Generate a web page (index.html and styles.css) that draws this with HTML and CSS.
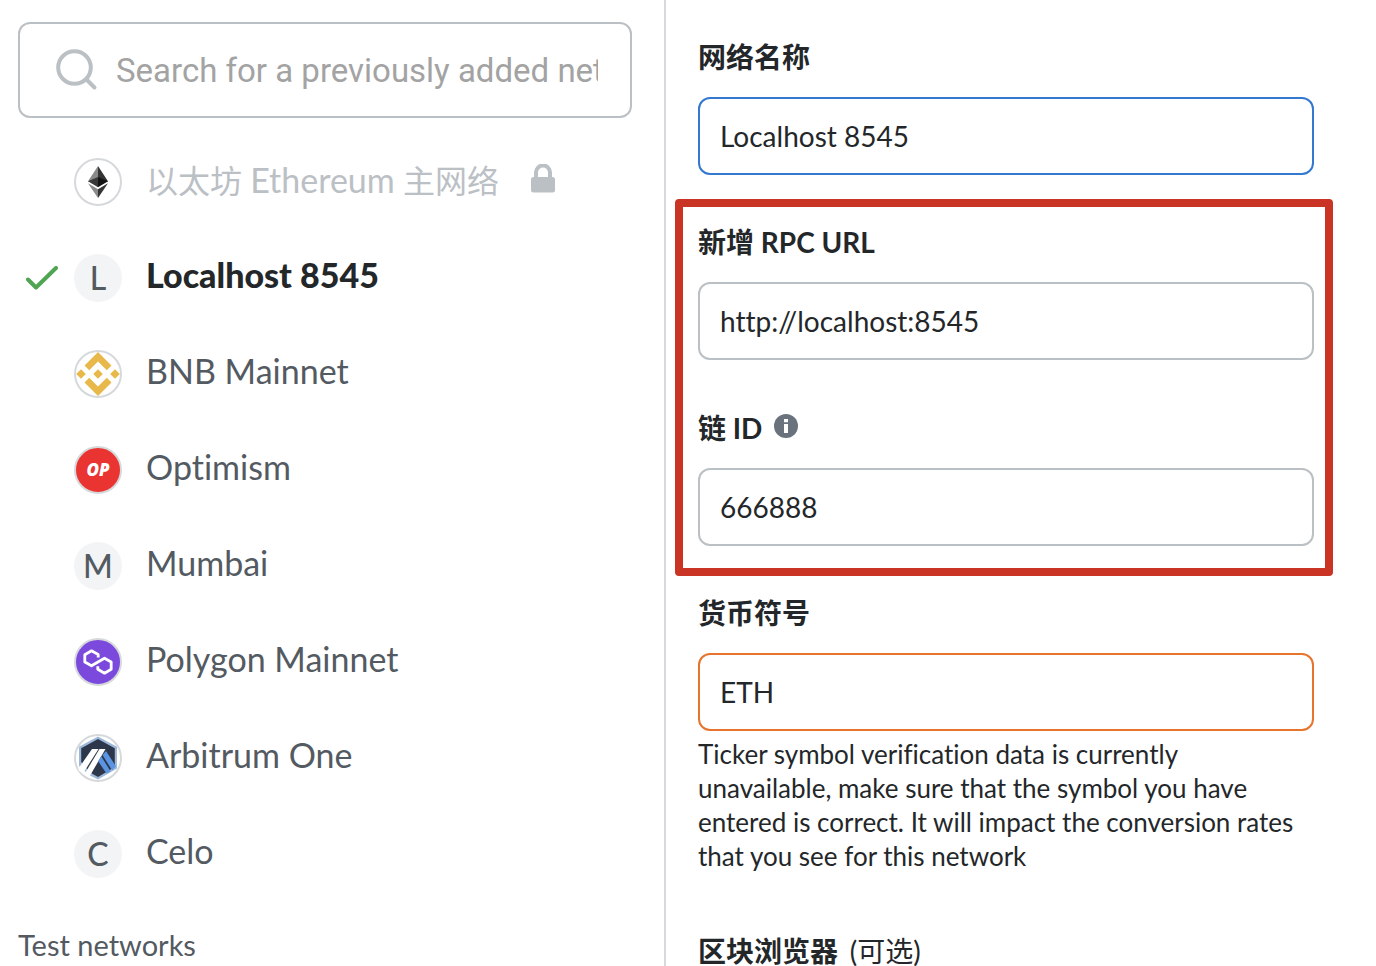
FILE: index.html
```html
<!DOCTYPE html>
<html lang="zh-CN">
<head>
<meta charset="utf-8">
<meta name="viewport" content="width=device-width, initial-scale=1">
<title>网络</title>
<link rel="stylesheet" href="styles.css">
</head>
<body>
<div class="app">
  <aside class="sidebar">
    <div class="search">
      <svg class="search-icon" viewBox="0 0 42 42" aria-hidden="true"><circle cx="18.500" cy="18.500" r="16.300"/><path d="M30.500 30.500 38.500 38.500"/></svg>
      <input class="search-input" type="text" aria-label="Search" placeholder="Search for a previously added network">
    </div>
    <ul class="networks">
      <li><button class="network locked" type="button">
        <span class="check"></span>
        <span class="avatar ringed"><svg viewBox="0 0 48 48" aria-hidden="true">
          <path fill="#8a8a8a" d="M24 8v19.600l-10-4.400z"/><path fill="#343434" d="M24 8l10 15.200-10 4.400z"/>
          <path fill="#393939" d="M24 19v10.200l-10-6z"/><path fill="#141414" d="M24 19l10 4.200-10 6z"/>
          <path fill="#8a8a8a" d="M14 25.200l10 6V40z"/><path fill="#343434" d="M34 25.200l-10 6V40z"/></svg></span>
        <span class="name">以太坊 <span class="latin">Ethereum</span> 主网络</span>
        <svg class="lock" viewBox="0 0 24 30" aria-hidden="true"><path d="M5 14V8.500a7 7 0 0 1 14 0V14" fill="none" stroke="currentColor" stroke-width="4"/><rect y="13" width="24" height="15.500" rx="2.500" fill="currentColor"/></svg>
      </button></li>
      <li><button class="network selected" type="button">
        <span class="check"><svg viewBox="0 0 32 24" aria-hidden="true"><path d="M2 13.500 10 21.500 30 2"/></svg></span>
        <span class="avatar">L</span>
        <span class="name">Localhost 8545</span>
      </button></li>
      <li><button class="network" type="button">
        <span class="check"></span>
        <span class="avatar ringed"><svg viewBox="0 0 48 48" aria-hidden="true"><g fill="#e8b94a">
          <path d="M24 2 37.500 15.500 32.800 20.200 24 11.400 15.200 20.200 10.500 15.500z"/>
          <path d="M24 46 37.500 32.500 32.800 27.800 24 36.600 15.200 27.800 10.500 32.500z"/>
          <path d="M24 19.200 28.800 24 24 28.800 19.200 24z"/><path d="M7 19.200 11.800 24 7 28.800 2.200 24z"/><path d="M41 19.200 45.800 24 41 28.800 36.200 24z"/></g></svg></span>
        <span class="name">BNB Mainnet</span>
      </button></li>
      <li><button class="network" type="button">
        <span class="check"></span>
        <span class="avatar ringed optimism">OP</span>
        <span class="name">Optimism</span>
      </button></li>
      <li><button class="network" type="button">
        <span class="check"></span>
        <span class="avatar">M</span>
        <span class="name">Mumbai</span>
      </button></li>
      <li><button class="network" type="button">
        <span class="check"></span>
        <span class="avatar ringed polygon"><svg viewBox="0 0 48 48" aria-hidden="true"><path fill="none" stroke="#fff" stroke-width="2.800" stroke-linejoin="round" d="M24.200 19.500V16.500L17.500 12.800 10.800 16.700V24L17.500 27.800 30.500 20.200 37.200 24V31.300L30.500 35.200 23.800 31.300V28.300"/></svg></span>
        <span class="name">Polygon Mainnet</span>
      </button></li>
      <li><button class="network" type="button">
        <span class="check"></span>
        <span class="avatar ringed"><svg viewBox="0 0 48 48" aria-hidden="true">
          <path fill="#9db8d9" d="M24 2.500 43 12.800V34.500L24 45.500 15 41 5 32V12.800z"/>
          <path fill="#2d374b" d="M24 5 40.800 14.200V33L24 43 16 38.500 7.200 28V14.200z"/>
          <path fill="#fff" d="M18 15h6.500L9 39.500 4.500 36.500V34.500z"/><path fill="#fff" d="M25.500 15h6L15.500 42.500 10.500 40z"/>
          <path fill="#5a94e3" d="M27.200 22.200 36.500 37.300 32.500 39.500 24.200 27.200z"/><path fill="#5a94e3" d="M32 17 42 32.500 38 36.200 28.500 21z"/>
        </svg></span>
        <span class="name">Arbitrum One</span>
      </button></li>
      <li><button class="network" type="button">
        <span class="check"></span>
        <span class="avatar">C</span>
        <span class="name">Celo</span>
      </button></li>
    </ul>
    <h2 class="section-title">Test networks</h2>
  </aside>
  <main class="form">
    <div class="field">
      <label class="label" for="name">网络名称</label>
      <input class="input focused" id="name" type="text" value="Localhost 8545">
    </div>
    <section class="highlight">
      <div class="field">
        <label class="label" for="rpc">新增 RPC URL</label>
        <input class="input" id="rpc" type="text" value="http://localhost:8545">
      </div>
      <div class="field">
        <div class="label-row">
          <label class="label" for="chain">链 ID</label>
          <svg class="info" viewBox="0 0 24 24" aria-hidden="true"><circle cx="12" cy="12" r="12" fill="#6a737d"/><path fill="#fff" d="M10 5h4v3.200h-4zM10 10h4v9h-4z"/></svg>
        </div>
        <input class="input" id="chain" type="text" value="666888">
      </div>
    </section>
    <div class="field">
      <label class="label" for="symbol">货币符号</label>
      <input class="input warning" id="symbol" type="text" value="ETH" aria-describedby="symbol-help">
      <p class="help" id="symbol-help">Ticker symbol verification data is currently<br>unavailable, make sure that the symbol you have<br>entered is correct. It will impact the conversion rates<br>that you see for this network</p>
    </div>
    <div class="field explorer">
      <label class="label" for="explorer">区块浏览器 <span class="optional">(可选)</span></label>
      <input class="input" id="explorer" type="text">
    </div>
  </main>
</div>
</body>
</html>
```
FILE: styles.css
```css
* {
  box-sizing: border-box;
}

body {
  margin: 0;
  background: #fff;
  color: #24272a;
  font-family: Lato, "Noto Sans CJK SC", sans-serif;
  font-variant-ligatures: none;
}

input,
button {
  font: inherit;
  font-variant-ligatures: none;
  color: inherit;
}

.app {
  display: grid;
  grid-template-columns: minmax(0, 666fr) minmax(0, 710fr);
  height: 100vh;
  overflow: hidden;
}

.sidebar {
  padding: 22px 32px 0 18px;
  border-right: 2px solid #d6d9dc;
}

.search {
  display: flex;
  align-items: center;
  gap: 18px;
  height: 96px;
  padding: 0 32px 0 36px;
  border: 2px solid #bbc0c5;
  border-radius: 12px;
}

.search-icon {
  flex: none;
  width: 42px;
  height: 42px;
  fill: none;
  stroke: #bbc0c5;
  stroke-width: 4;
  stroke-linecap: round;
}

.search-input {
  flex: 1;
  min-width: 0;
  padding: 0;
  border: 0;
  outline: 0;
  background: none;
  font-family: Roboto, sans-serif;
  font-size: 33px;
}

.search-input::placeholder {
  color: #a3a3a3;
  opacity: 1;
}

.networks {
  margin: 16px 0 0;
  padding: 0;
  list-style: none;
}

.network {
  display: flex;
  align-items: center;
  width: 100%;
  height: 96px;
  padding: 0 0 0 8px;
  border: 0;
  background: none;
  color: #535a61;
  font-size: 34px;
  line-height: 48px;
  text-align: left;
}

.check {
  width: 48px;
}

.check svg {
  display: block;
  width: 32px;
  height: 24px;
  fill: none;
  stroke: #4fa552;
  stroke-width: 4;
  stroke-linecap: round;
  stroke-linejoin: round;
}

.avatar {
  display: flex;
  flex: none;
  align-items: center;
  justify-content: center;
  width: 48px;
  height: 48px;
  border-radius: 50%;
  background: #f2f4f6;
  font-size: 32px;
  font-weight: 500;
}

.avatar svg {
  flex: none;
  width: 48px;
  height: 48px;
}

.ringed {
  border: 2px solid #d6d9dc;
  background: #fff;
}

.optimism {
  background: #ea3431;
  color: #fff;
  font-family: "Open Sans", sans-serif;
  font-size: 17px;
  font-style: italic;
  font-weight: 800;
}

.polygon {
  background: #7b49dc;
}

.name {
  margin-left: 24px;
  padding-bottom: 6px;
}

.selected .name {
  color: #24272a;
  font-weight: 900;
}

.locked .name {
  padding-bottom: 4px;
  color: #bbc0c5;
  font-size: 32px;
}

.latin {
  font-size: 34px;
}

.lock {
  width: 24px;
  height: 30px;
  margin: 0 0 6px 32px;
  color: #bbc0c5;
}

.section-title {
  margin: 23px 0 0;
  color: #535a61;
  font-size: 29px;
  font-weight: 400;
  line-height: 40px;
}

.form {
  padding: 37px 62px 0 32px;
}

.label-row {
  display: flex;
  align-items: center;
  gap: 12px;
}

.label {
  display: block;
  font-size: 28px;
  font-weight: 700;
  line-height: 40px;
}

.label-row .label {
  flex: none;
}

.info {
  width: 24px;
  height: 24px;
  margin-bottom: 4px;
}

.input {
  display: block;
  width: 100%;
  height: 78px;
  margin-top: 20px;
  padding: 0 20px;
  border: 2px solid #bbc0c5;
  border-radius: 12px;
  outline: 0;
  background: #fff;
  font-size: 28px;
}

.focused {
  border-color: #3478d0;
}

.warning {
  border-color: #e8732c;
}

.highlight {
  margin: 24px -19px 17px -23px;
  padding: 15px 11px 22px 15px;
  border: 8px solid #c93424;
  border-radius: 4px;
}

.highlight .field + .field {
  margin-top: 48px;
}

.help {
  margin: 6px 0 0;
  font-size: 26px;
  line-height: 34px;
}

.explorer {
  margin-top: 58px;
}

.optional {
  margin-left: 5px;
  font-weight: 400;
}
```
